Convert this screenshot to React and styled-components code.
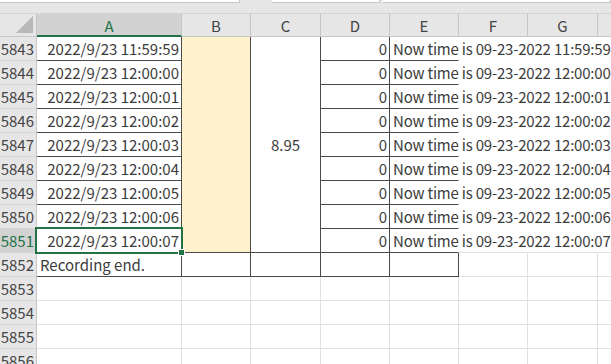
import React from "react";
import styled, { createGlobalStyle } from "styled-components";

const GlobalStyle = createGlobalStyle`
  html, body {
    margin: 0;
    padding: 0;
    background: #ffffff;
    overflow: hidden;
  }
  body {
    font-family: "Noto Sans CJK JP", "Noto Sans", sans-serif;
  }
`;

const GRID = "#e1e1e1";
const DARK = "#4b4b4b";
const GREEN = "#217346";

const times = [
  "11:59:59",
  "12:00:00",
  "12:00:01",
  "12:00:02",
  "12:00:03",
  "12:00:04",
  "12:00:05",
  "12:00:06",
  "12:00:07",
];

function Sheet() {
  const first = 5843;
  const active = 5851;

  return (
    <Page>
      <GlobalStyle />
      <TopBar>
        <TopBox $w={240} />
        <Gap $w={32} />
        <TopBox $w={108} />
        <Gap $w={3} />
        <TopBox $grow />
      </TopBar>
      <Grid>
        {/* merged B and C blocks, placed explicitly; the rest flows around them */}
        <Merged $bg="#fff2cc" $col={3} />
        <Merged $bg="#ffffff" $col={4}>
          8.95
        </Merged>

        <Corner>
          <Triangle />
        </Corner>
        {["A", "B", "C", "D", "E", "F", "G", ""].map((c, k) => (
          <ColHead key={k} $selected={c === "A"}>
            {c}
          </ColHead>
        ))}

        {times.map((t, i) => {
          const row = first + i;
          const last = i === times.length - 1;
          const fill = last ? GRID : "transparent";
          return (
            <React.Fragment key={row}>
              <RowHead $selected={row === active}>{row}</RowHead>
              <Cell $align="right" $r={DARK} $b={DARK} $top={row === active}>
                2022/9/23 {t}
                {row === active && (
                  <Active>
                    <Handle />
                  </Active>
                )}
              </Cell>
              <Cell $align="right" $r={DARK} $b={DARK}>
                0
              </Cell>
              <Cell $overflow $r="transparent" $b={DARK}>
                Now time is 09-23-2022 {t}
              </Cell>
              <Cell $r="transparent" $b={fill} />
              <Cell $r="transparent" $b={fill} />
              <Cell $r="transparent" $b={fill} />
            </React.Fragment>
          );
        })}

        <RowHead>5852</RowHead>
        <Cell $r={DARK} $b={DARK}>
          Recording end.
        </Cell>
        <Cell $r={DARK} $b={DARK} />
        <Cell $r={DARK} $b={DARK} />
        <Cell $r={DARK} $b={DARK} />
        <Cell $r={DARK} $b={DARK} />
        <Cell />
        <Cell />
        <Cell />

        {[5853, 5854, 5855, 5856].map((row) => (
          <React.Fragment key={row}>
            <RowHead>{row}</RowHead>
            {[0, 1, 2, 3, 4, 5, 6, 7].map((c) => (
              <Cell key={c} />
            ))}
          </React.Fragment>
        ))}
      </Grid>
    </Page>
  );
}

const Page = styled.div`
  width: 611px;
  height: 364px;
  overflow: hidden;
  background: #e6e6e6;
  display: flex;
  flex-direction: column;
`;

const TopBar = styled.div`
  height: 13px;
  flex: none;
  display: flex;
  align-items: flex-start;
  background: #e6e6e6;
`;

const TopBox = styled.div`
  height: 3px;
  box-sizing: border-box;
  width: ${(p) => (p.$w ? `${p.$w}px` : "auto")};
  flex: ${(p) => (p.$grow ? "1" : "none")};
  background: #ffffff;
  border-bottom: 1px solid #c6c6c6;
  border-right: 1px solid #c6c6c6;
`;

const Gap = styled.div`
  width: ${(p) => p.$w}px;
  flex: none;
`;

const Grid = styled.div`
  flex: 1;
  display: grid;
  grid-template-columns: 37px 145px 69px 70px 69px 69px 69px 70px 60px;
  grid-template-rows: repeat(15, 24px);
  background: #ffffff;
  font-size: 15px;
  color: #3c3c3c;
`;

const Corner = styled.div`
  position: relative;
  background: #e6e6e6;
  box-sizing: border-box;
  border-right: 1px solid #c6c6c6;
  border-bottom: 1px solid #c6c6c6;
  border-top: 1px solid #d4d4d4;
`;

const Triangle = styled.div`
  position: absolute;
  right: 3px;
  bottom: 3px;
  width: 0;
  height: 0;
  border-left: 17px solid transparent;
  border-bottom: 17px solid #b8b8b8;
`;

const ColHead = styled.div`
  display: flex;
  align-items: center;
  justify-content: center;
  box-sizing: border-box;
  background: ${(p) => (p.$selected ? "#d2d2d2" : "#e6e6e6")};
  color: ${(p) => (p.$selected ? GREEN : "#444444")};
  border-top: 1px solid #d4d4d4;
  border-right: 1px solid #c6c6c6;
  border-bottom: ${(p) => (p.$selected ? `2px solid ${GREEN}` : "1px solid #c6c6c6")};
  font-size: 15px;
  padding-top: 1px;
`;

const RowHead = styled.div`
  display: flex;
  align-items: center;
  justify-content: flex-end;
  padding-right: 2px;
  box-sizing: border-box;
  background: ${(p) => (p.$selected ? "#d2d2d2" : "#e6e6e6")};
  color: ${(p) => (p.$selected ? GREEN : "#444444")};
  border-right: 1px solid #c6c6c6;
  border-bottom: 1px solid #d4d4d4;
  font-size: 15px;
`;

const Cell = styled.div`
  position: relative;
  display: flex;
  align-items: center;
  justify-content: ${(p) => (p.$align === "right" ? "flex-end" : "flex-start")};
  padding: 0 2px 0 3px;
  box-sizing: border-box;
  white-space: nowrap;
  overflow: ${(p) => (p.$overflow || p.$top ? "visible" : "hidden")};
  z-index: ${(p) => (p.$top ? 3 : p.$overflow ? 2 : 1)};
  background: ${(p) => (p.$overflow ? "transparent" : "#ffffff")};
  letter-spacing: ${(p) => (p.$overflow ? "-0.2px" : "normal")};
  border-right: 1px solid ${(p) => p.$r || GRID};
  border-bottom: 1px solid ${(p) => p.$b || GRID};
`;

const Merged = styled.div`
  grid-column: ${(p) => p.$col};
  grid-row: 2 / span 9;
  display: flex;
  align-items: center;
  justify-content: center;
  box-sizing: border-box;
  background: ${(p) => p.$bg};
  border-right: 1px solid ${DARK};
  border-bottom: 1px solid ${DARK};
`;

const Active = styled.div`
  position: absolute;
  left: -2px;
  right: -2px;
  top: -2px;
  bottom: -2px;
  border: 2px solid ${GREEN};
  pointer-events: none;
`;

const Handle = styled.div`
  position: absolute;
  right: -4px;
  bottom: -4px;
  width: 5px;
  height: 5px;
  background: ${GREEN};
  border: 1px solid #ffffff;
`;

export default function App() {
  return <Sheet />;
}
